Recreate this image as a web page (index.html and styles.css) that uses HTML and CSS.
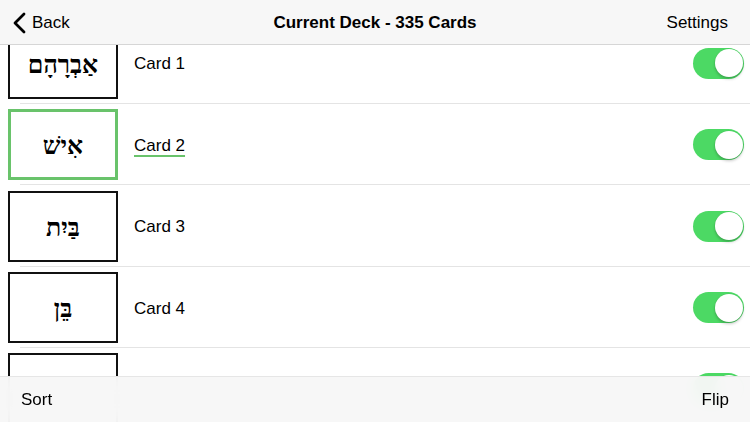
FILE: index.html
```html
<!DOCTYPE html>
<html lang="en">
<head>
<meta charset="utf-8">
<title>Current Deck</title>
<link rel="stylesheet" href="styles.css">
</head>
<body>
<div class="screen">
  <header class="navbar">
    <div class="nav-left">
      <svg class="chevron" width="14" height="22" viewBox="0 0 14 22"><path d="M11 2 L2 11 L11 20" fill="none" stroke="#000" stroke-width="2.8" stroke-linecap="round" stroke-linejoin="round"/></svg>
      <span>Back</span>
    </div>
    <div class="nav-title">Current Deck - 335 Cards</div>
    <div class="nav-right">Settings</div>
  </header>
  <main class="list-viewport">
    <ul class="list">
      <li class="row">
        <div class="card"><span class="heb" lang="he" dir="rtl">אַבְרָהָם</span></div>
        <span class="label">Card 1</span>
        <span class="toggle"><span class="knob"></span></span>
      </li>
      <li class="row">
        <div class="card card-active"><span class="heb" lang="he" dir="rtl">אִישׁ</span></div>
        <span class="label label-active">Card 2</span>
        <span class="toggle"><span class="knob"></span></span>
      </li>
      <li class="row">
        <div class="card"><span class="heb" lang="he" dir="rtl">בַּיִת</span></div>
        <span class="label">Card 3</span>
        <span class="toggle"><span class="knob"></span></span>
      </li>
      <li class="row">
        <div class="card"><span class="heb" lang="he" dir="rtl">בֵּן</span></div>
        <span class="label">Card 4</span>
        <span class="toggle"><span class="knob"></span></span>
      </li>
      <li class="row">
        <div class="card"></div>
        <span class="label"></span>
        <span class="toggle"><span class="knob"></span></span>
      </li>
    </ul>
  </main>
  <footer class="toolbar">
    <span>Sort</span>
    <span>Flip</span>
  </footer>
</div>
</body>
</html>
```
FILE: styles.css
```css
* { box-sizing: border-box; }
html, body { margin: 0; padding: 0; }
body {
  font-family: "Liberation Sans", Arial, sans-serif;
  color: #000;
  background: #fff;
}
.screen {
  position: relative;
  width: 750px;
  height: 422px;
  overflow: hidden;
  display: flex;
  flex-direction: column;
}
.navbar {
  flex: 0 0 45px;
  height: 45px;
  background: #f7f7f7;
  border-bottom: 1px solid #d6d6d6;
  display: flex;
  align-items: center;
  justify-content: space-between;
  padding: 2px 22px 0 13px;
  font-size: 17px;
  position: relative;
  z-index: 2;
}
.nav-left {
  display: flex;
  align-items: center;
  gap: 5px;
}
.chevron { display: block; margin-top: 0; }
.nav-title {
  font-weight: bold;
  position: absolute;
  left: 0;
  right: 0;
  top: 2px;
  bottom: 0;
  display: flex;
  align-items: center;
  justify-content: center;
  pointer-events: none;
}
.list-viewport {
  flex: 1;
  overflow: hidden;
}
.list {
  list-style: none;
  margin: -22.3px 0 0 0;
  padding: 0;
}
.row {
  position: relative;
  height: 81.4px;
  display: flex;
  align-items: center;
  padding: 0 6px 0 8px;
}
.row::after {
  content: "";
  position: absolute;
  left: 20px;
  right: 0;
  bottom: 0;
  height: 1px;
  background: #e4e4e4;
}
.card {
  width: 110px;
  height: 71px;
  border: 2px solid #111;
  display: flex;
  align-items: center;
  justify-content: center;
  flex: 0 0 auto;
}
.card-active {
  border: 3px solid #69c36b;
}
.heb {
  font-family: "Liberation Serif", "Times New Roman", serif;
  font-weight: bold;
  font-size: 25px;
  line-height: 1;
  margin-top: 2px;
}
.label {
  margin-left: 16px;
  margin-top: 2px;
  font-size: 17px;
  flex: 1;
}
.label-active {
  text-decoration: underline;
  text-decoration-color: #69c36b;
  text-decoration-thickness: 2px;
  text-underline-offset: 4px;
}
.toggle {
  position: relative;
  width: 51px;
  height: 31px;
  border-radius: 16px;
  background: #4cd964;
  flex: 0 0 auto;
  display: flex;
  align-items: center;
  justify-content: flex-end;
  padding-right: 1.5px;
}
.knob {
  width: 28px;
  height: 28px;
  border-radius: 50%;
  background: #fff;
  box-shadow: 0 2px 3px rgba(0,0,0,0.22), 0 0 0 0.5px rgba(0,0,0,0.06);
}
.toolbar {
  position: absolute;
  left: 0;
  right: 0;
  bottom: 0;
  height: 46px;
  background: rgba(247,247,247,0.96);
  backdrop-filter: blur(8px);
  border-top: 1px solid #e6e6e6;
  display: flex;
  align-items: center;
  justify-content: space-between;
  padding: 0 21px 0 21px;
  font-size: 17px;
  z-index: 2;
}
```
